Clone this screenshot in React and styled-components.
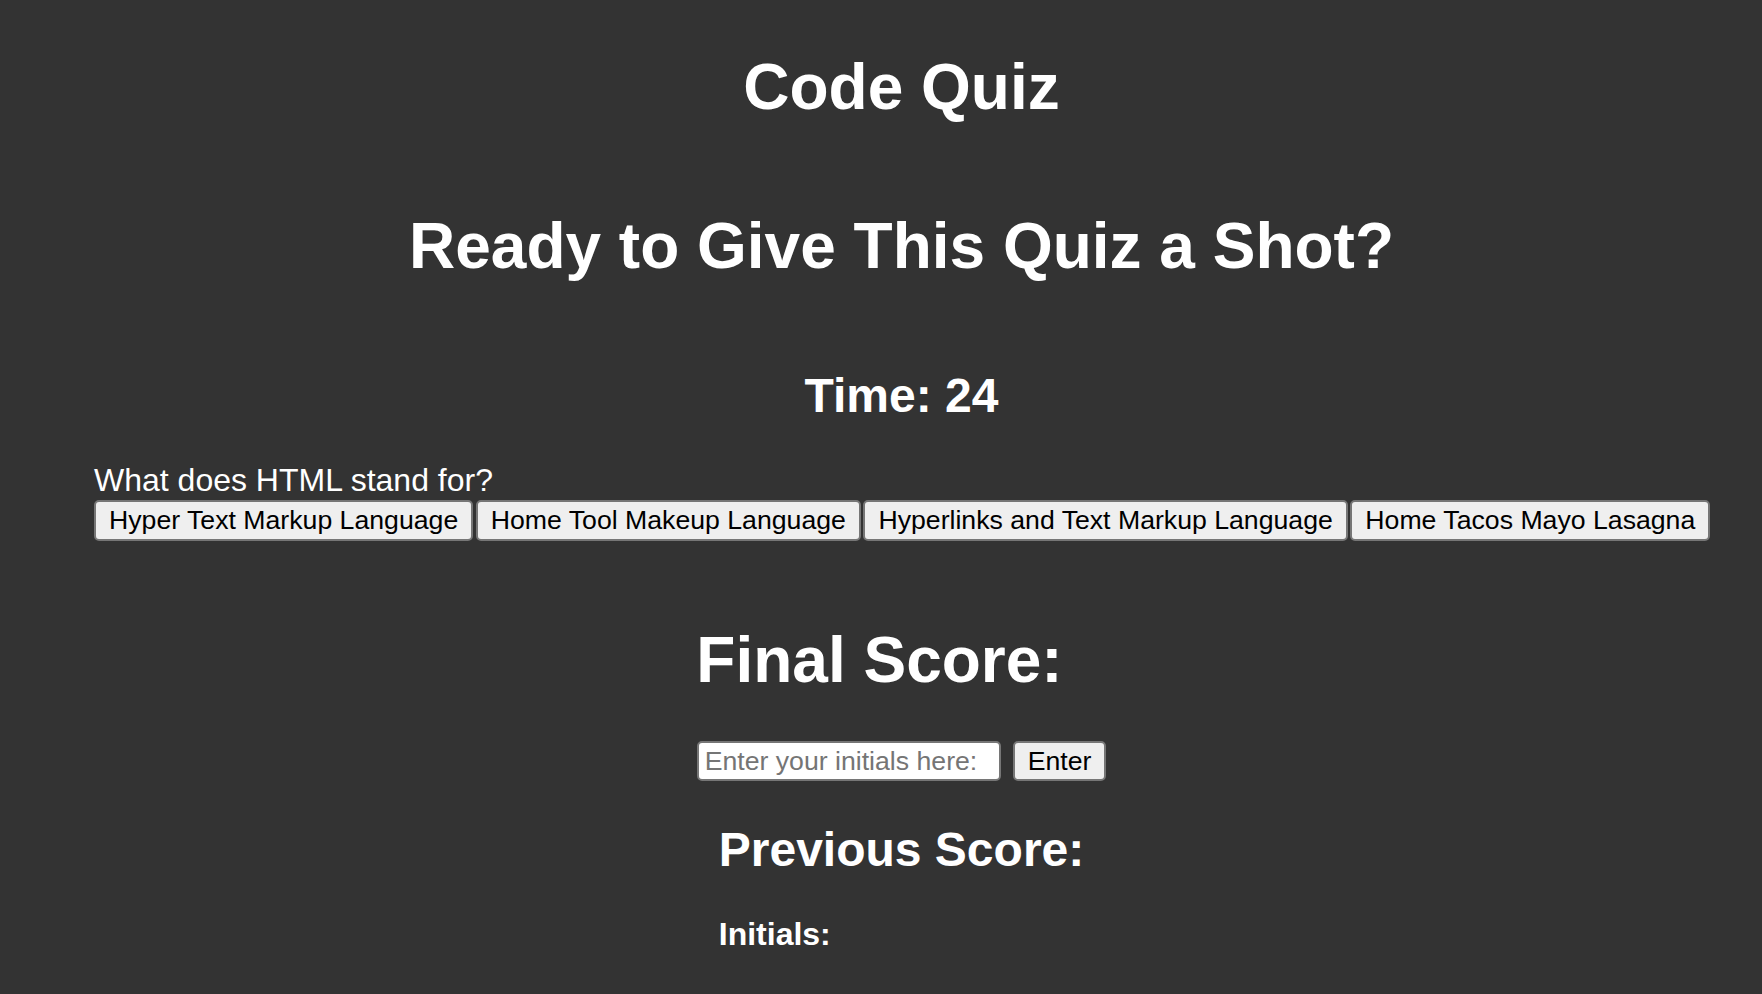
import React from 'react';
import styled, { createGlobalStyle } from 'styled-components';

const GlobalStyle = createGlobalStyle`
  html, body {
    margin: 0;
    padding: 0;
    background-color: #333333;
  }

  body {
    color: #ffffff;
    font-family: "Liberation Sans", Arial, Helvetica, sans-serif;
  }
`;

const Page = styled.main`
  padding: 50px 53px 40px 94px;
`;

const Title = styled.h1`
  margin: ${props => props.top || 0}px 0 0;
  font-size: 64px;
  font-weight: bold;
  line-height: normal;
  text-align: center;
  padding-right: ${props => props.shift || 0}px;
`;

const Timer = styled.h2`
  margin: 85px 0 39px;
  font-size: 48px;
  font-weight: bold;
  line-height: normal;
  text-align: center;
`;

const Question = styled.p`
  margin: 0 0 1px;
  font-size: 32px;
  line-height: normal;
`;

const Choices = styled.div`
  display: flex;
  flex-wrap: nowrap;
  gap: 2.5px;
`;

const Button = styled.button`
  height: ${props => props.tall || 41}px;
  margin: 0;
  padding: 0 13px;
  font-family: "Liberation Sans", Arial, Helvetica, sans-serif;
  font-size: 26.67px;
  color: #000000;
  background-color: #efefef;
  border: 2px solid #767676;
  border-radius: 5px;
  white-space: nowrap;
  cursor: pointer;
`;

const ScoreForm = styled.form`
  display: flex;
  justify-content: center;
  gap: 12px;
  margin-top: 44px;
`;

const Initials = styled.input`
  box-sizing: border-box;
  width: 304px;
  height: 40px;
  margin: 0;
  padding: 0 6px;
  font-family: "Liberation Sans", Arial, Helvetica, sans-serif;
  font-size: 26.67px;
  color: #000000;
  background-color: #ffffff;
  border: 2px solid #767676;
  border-radius: 5px;

  &::placeholder {
    color: #757575;
  }
`;

const ScoreBoard = styled.section`
  width: fit-content;
  margin: 41px auto 0;
`;

const BoardTitle = styled.h2`
  margin: 0 0 39px;
  font-size: 48px;
  font-weight: bold;
  line-height: normal;
`;

const BoardLabel = styled.h4`
  margin: 0;
  font-size: 32px;
  font-weight: bold;
  line-height: normal;
`;

const choices = [
  'Hyper Text Markup Language',
  'Home Tool Makeup Language',
  'Hyperlinks and Text Markup Language',
  'Home Tacos Mayo Lasagna',
];

const App = () => {
  return (
    <>
      <GlobalStyle />
      <Page>
        <Title>Code Quiz</Title>
        <Title top={85}>Ready to Give This Quiz a Shot?</Title>
        <Timer>Time: 24</Timer>

        <Question>What does HTML stand for?</Question>
        <Choices>
          {choices.map(choice => (
            <Button key={choice} type="button">{choice}</Button>
          ))}
        </Choices>

        <Title top={82} shift={44}>Final Score:</Title>
        <ScoreForm onSubmit={e => e.preventDefault()}>
          <Initials type="text" placeholder="Enter your initials here:" />
          <Button type="submit" tall={40}>Enter</Button>
        </ScoreForm>

        <ScoreBoard>
          <BoardTitle>Previous Score:</BoardTitle>
          <BoardLabel>Initials:</BoardLabel>
        </ScoreBoard>
      </Page>
    </>
  );
};

export default App;
